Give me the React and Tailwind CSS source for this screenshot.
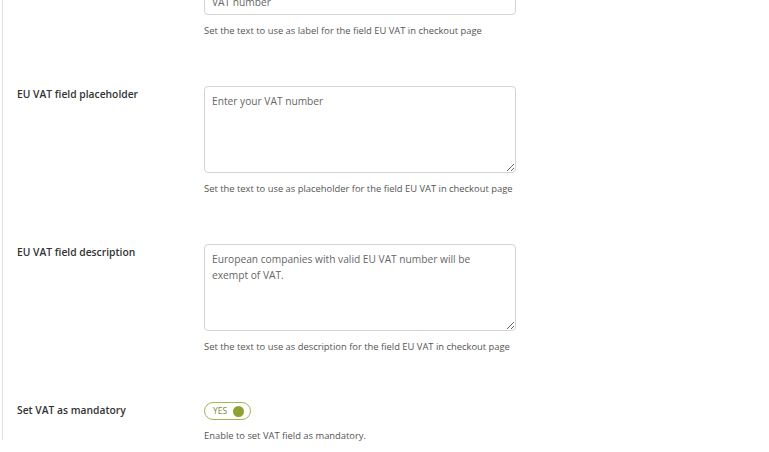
import React from "react";

const rows = [
  {
    label: "EU VAT field placeholder",
    value: "Enter your VAT number",
    help: "Set the text to use as placeholder for the field EU VAT in checkout page",
  },
  {
    label: "EU VAT field description",
    value: "European companies with valid EU VAT number will be exempt of VAT.",
    help: "Set the text to use as description for the field EU VAT in checkout page",
  },
];

function Help({ children }) {
  return (
    <p className="mt-[10px] text-[9.4px] leading-[12px] text-[#555]">{children}</p>
  );
}

function Row({ label, children }) {
  return (
    <div className="flex pb-[49px]">
      <div className="w-[187px] shrink-0 pt-[1px] text-[10.3px] font-semibold leading-[14px] text-[#333]">
        {label}
      </div>
      <div className="w-[312px]">{children}</div>
    </div>
  );
}

export default function App() {
  return (
    <div
      className="h-[452px] overflow-hidden bg-white pl-[2px]"
      style={{ fontFamily: '"Open Sans", "Noto Sans", sans-serif' }}
    >
      <div className="h-[452px] border-l border-[#e2e2e2] pl-[14px]">
        <div className="-mt-[12px]">
          {/* label field, its top and its label are scrolled out of view */}
          <Row label="">
            <div className="h-[27px] rounded-[4px] border border-[#d4d4d4] px-[7px] pt-[6px] text-[10.2px] leading-[14px] text-[#666]">
              VAT number
            </div>
            <Help>Set the text to use as label for the field EU VAT in checkout page</Help>
          </Row>

          {rows.map((row) => (
            <Row key={row.label} label={row.label}>
              <textarea
                readOnly
                defaultValue={row.value}
                className="block h-[87px] w-full resize-y rounded-[4px] border border-[#d4d4d4] px-[7px] pt-[6px] text-[10.2px] leading-[16px] text-[#666] outline-none"
                style={{ fontFamily: '"Open Sans", "Noto Sans", sans-serif' }}
              />
              <Help>{row.help}</Help>
            </Row>
          ))}

          <Row label="Set VAT as mandatory">
            <div className="flex h-[18px] w-[47px] items-center gap-[6px] rounded-full border border-[#a3b557] pl-[8px]">
              <span className="text-[8.5px] leading-none text-[#7a8a3a]">YES</span>
              <span className="h-[11px] w-[11px] rounded-full bg-[#8ea232]" />
            </div>
            <Help>Enable to set VAT field as mandatory.</Help>
          </Row>
        </div>
      </div>
    </div>
  );
}
